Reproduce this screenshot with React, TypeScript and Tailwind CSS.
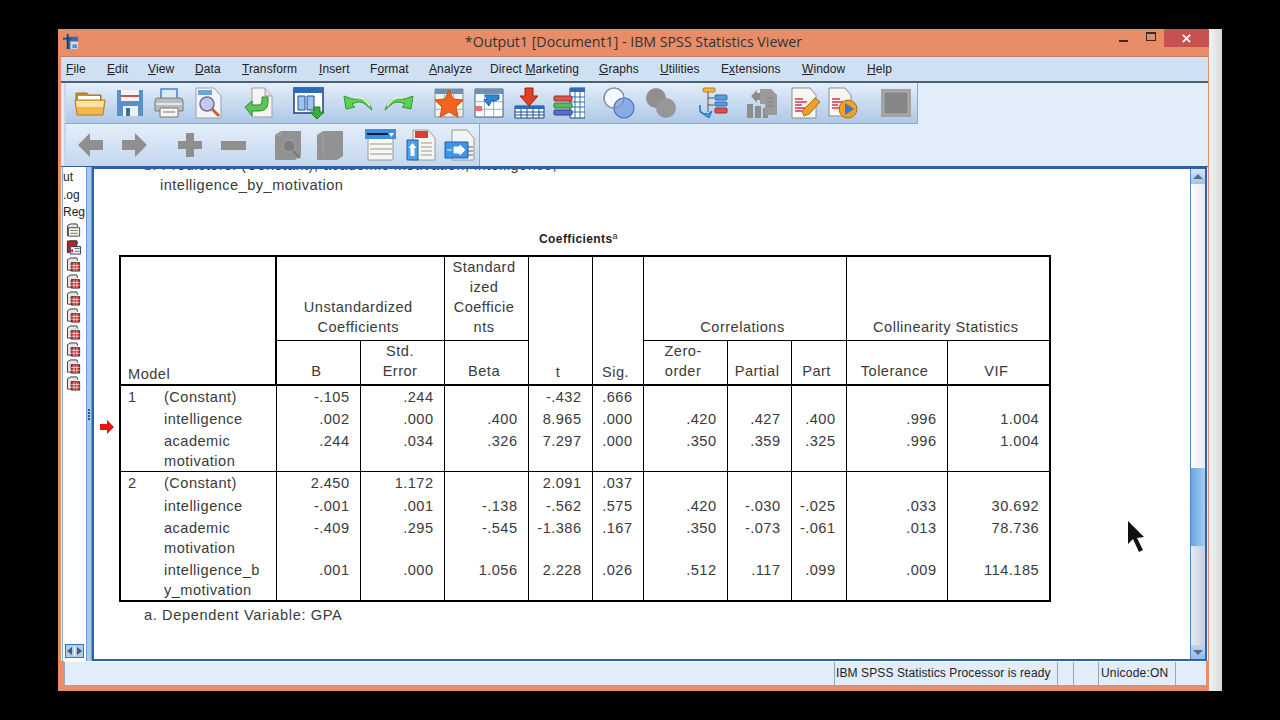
import React from "react";

const MENU: [string, string, string, string][] = [
  ["", "F", "ile", "w-[41px]"],
  ["", "E", "dit", "w-[41px]"],
  ["", "V", "iew", "w-[47px]"],
  ["", "D", "ata", "w-[47px]"],
  ["", "T", "ransform", "w-[77px]"],
  ["", "I", "nsert", "w-[51px]"],
  ["F", "o", "rmat", "w-[59px]"],
  ["", "A", "nalyze", "w-[61px]"],
  ["Direct ", "M", "arketing", "w-[109px]"],
  ["", "G", "raphs", "w-[61px]"],
  ["", "U", "tilities", "w-[61px]"],
  ["E", "x", "tensions", "w-[81px]"],
  ["", "W", "indow", "w-[65px]"],
  ["", "H", "elp", "w-[40px]"],
];

function Sheet({ children }: { children?: React.ReactNode }) {
  return (
    <svg viewBox="0 0 32 32" className="w-[32px] h-[32px] shrink-0">
      {children}
    </svg>
  );
}

const IconOpen = () => (
  <Sheet>
    <path d="M2 6h11l2 2h12v10H2z" fill="#c98a2a" stroke="#a8701c" />
    <path d="M4 9h22v6H4z" fill="#fff" />
    <path d="M1 13h30l-2 15H3z" fill="#f7b64b" stroke="#b97a1f" />
    <path d="M2 14h28l-1 6H3z" fill="#fde3a5" />
  </Sheet>
);
const IconSave = () => (
  <Sheet>
    <path d="M3 3h26v26H3z" fill="#5b8fc7" />
    <path d="M7 3h18v11H7z" fill="#f3f3f3" />
    <path d="M7 8h18v2H7z" fill="#c8505f" />
    <path d="M9 19h15v10H9z" fill="#eef2f6" />
    <path d="M12 21h4v8h-4z" fill="#3f6d9f" />
  </Sheet>
);
const IconPrint = () => (
  <Sheet>
    <path d="M8 2h16v10H8z" fill="#dbe8f5" stroke="#4f81bd" strokeWidth="1.5" />
    <path d="M2 14q0-3 3-3h22q3 0 3 3v10H2z" fill="#b9bcc0" stroke="#7a7d80" />
    <path d="M3 16h26v2H3z" fill="#e6e6e6" />
    <path d="M7 21h18v9H7z" fill="#f4f4f4" stroke="#777" />
    <path d="M10 25h12" stroke="#777" />
  </Sheet>
);
const IconPreview = () => (
  <Sheet>
    <path d="M3 1h18l7 8v22H3z" fill="#f2f4f7" stroke="#9aa0a8" />
    <path d="M5 3h14v5H5z" fill="#6fa3d8" />
    <circle cx="14" cy="17" r="7" fill="#c5c8ef" stroke="#6b6f90" strokeWidth="1.5" />
    <path d="M19 22l7 7" stroke="#c9603a" strokeWidth="3" />
  </Sheet>
);
const IconGoto = () => (
  <Sheet>
    <path d="M9 1h13l7 8v21H9z" fill="#f4f4f0" stroke="#a0a0a0" />
    <path d="M22 1v8h7" fill="#ddd" stroke="#a0a0a0" />
    <path d="M2 20l7-6v4h7q3 0 3-4v-4h6v5q0 9-9 9H9v5z" fill="#5dc45a" stroke="#2f8a33" />
  </Sheet>
);
const IconVars = () => (
  <Sheet>
    <path d="M1 1h29v25H1z" fill="#fff" stroke="#1f3f78" strokeWidth="1.5" />
    <path d="M1 1h29v5H1z" fill="#2c6cb5" />
    <path d="M5 9h7v14H5zM14 9h7v14h-7z" fill="#9cc4ec" stroke="#1f4f90" />
    <path d="M21 20h6v5h4l-7 7-7-7h4z" fill="#3aae3a" stroke="#1e7d22" />
  </Sheet>
);
const IconUndo = () => (
  <Sheet>
    <path d="M2 9l2 13 9-2-3-3q8-4 13 0l7 6q-3-14-20-11z" fill="#5dd04f" stroke="#2f9a33" />
    <path d="M12 11q10-2 16 8" stroke="#e8f2dc" fill="none" strokeWidth="1.5" />
  </Sheet>
);
const IconRedo = () => (
  <Sheet>
    <path d="M30 9l-2 13-9-2 3-3q-8-4-13 0l-7 6q3-14 20-11z" fill="#5dd04f" stroke="#2f9a33" />
    <path d="M20 11q-10-2-16 8" stroke="#e8f2dc" fill="none" strokeWidth="1.5" />
  </Sheet>
);
const Grid = ({ x, y, w, h }: { x: number; y: number; w: number; h: number }) => (
  <g stroke="#8a9bb0" strokeWidth="0.8">
    <path d={`M${x} ${y + h / 3}h${w}M${x} ${y + (2 * h) / 3}h${w}`} />
    <path d={`M${x + w / 3} ${y}v${h}M${x + (2 * w) / 3} ${y}v${h}`} />
  </g>
);
const IconStar = () => (
  <Sheet>
    <path d="M2 2h28v28H2z" fill="#f3f3ee" stroke="#8d8d8d" />
    <path d="M2 2h28v5H2z" fill="#6f8fb8" />
    <Grid x={2} y={7} w={28} h={23} />
    <path d="M16 3l4 9 10 1-7 7 2 10-9-5-9 5 2-10-7-7 10-1z" fill="#f2641e" stroke="#c94d12" />
  </Sheet>
);
const IconCases = () => (
  <Sheet>
    <path d="M2 2h28v28H2z" fill="#fff" stroke="#3d5a80" />
    <path d="M2 2h28v5H2z" fill="#6f8fb8" />
    <Grid x={2} y={7} w={28} h={23} />
    <path d="M2 19h7v5H2z" fill="#ee6a73" />
    <path d="M12 8h14v4l-4 2h-4l-2 5-5-6 3-1z" fill="#2e86d6" stroke="#1f5fa0" />
  </Sheet>
);
const IconInsert = () => (
  <Sheet>
    <path d="M12 1h8v8h5l-9 10-9-10h5z" fill="#e04027" stroke="#9c2413" />
    <path d="M2 19h29v12H2z" fill="#fff" stroke="#1f3f78" />
    <path d="M2 19h29v3H2z" fill="#2c6cb5" />
    <path d="M2 25h29M2 28h29M8 22v9M14 22v9M20 22v9M26 22v9" stroke="#1f4f90" />
  </Sheet>
);
const IconSplit = () => (
  <Sheet>
    <path d="M17 1h15v30H17z" fill="#fff" stroke="#1f3f78" />
    <path d="M17 1h15v4H17z" fill="#2c6cb5" />
    <path d="M17 10h15M17 15h15M17 20h15M17 25h15M22 5v26M27 5v26" stroke="#2c6cb5" />
    <rect x="1" y="9" width="18" height="5" rx="1" fill="#d9534f" stroke="#9c2b28" />
    <rect x="1" y="16" width="18" height="5" rx="1" fill="#5cb85c" stroke="#2f8a33" />
    <rect x="1" y="23" width="18" height="5" rx="1" fill="#5a6fc9" stroke="#33408f" />
  </Sheet>
);
const IconVenn = () => (
  <Sheet>
    <circle cx="11" cy="11" r="10" fill="#f5f8fc" stroke="#8290a6" strokeWidth="1.2" />
    <circle cx="21" cy="21" r="10" fill="#7fa5e6" fillOpacity="0.85" stroke="#4870b8" strokeWidth="1.2" />
    <circle cx="11" cy="11" r="10" fill="none" stroke="#8290a6" strokeWidth="1.2" />
  </Sheet>
);
const IconVennGray = () => (
  <Sheet>
    <circle cx="11" cy="11" r="10" fill="#8f8f8f" />
    <circle cx="21" cy="21" r="10" fill="#979797" />
  </Sheet>
);
const IconTree = () => (
  <Sheet>
    <rect x="6" y="1" width="12" height="4" rx="1" fill="#f2b640" stroke="#b98417" />
    <path d="M11 5v20M11 11h6M11 18h6" stroke="#555" fill="none" />
    <rect x="18" y="8" width="12" height="5" rx="1" fill="#5a9bd8" stroke="#2c6cb5" />
    <rect x="18" y="15" width="12" height="4" rx="1" fill="#5a9bd8" stroke="#2c6cb5" />
    <rect x="18" y="21" width="12" height="5" rx="1" fill="#d9534f" stroke="#9c2b28" />
    <path d="M3 18q-2 9 8 9l4-3-3 7-9-6z" fill="#3ba0e6" stroke="#1f6fb5" />
  </Sheet>
);
const IconScriptGray = () => (
  <Sheet>
    <path d="M1 17h6v14H1zM9 19h6v12H9zM17 21h5v10h-5z" fill="#8d8d8d" />
    <path d="M5 9l6-6v3h6v7h-6v3z" fill="#8d8d8d" />
    <path d="M14 2h11l6 6v20H19V17h-5z" fill="#9a9a9a" />
    <path d="M21 11h7M21 15h7M21 19h7" stroke="#7f7f7f" />
  </Sheet>
);
const IconEdit = () => (
  <Sheet>
    <path d="M3 1h18l6 7v23H3z" fill="#f6f6f2" stroke="#8d8d8d" />
    <path d="M6 12h8M6 15h12M6 18h7M6 21h10M6 24h8" stroke="#d8354f" strokeWidth="1.6" />
    <path d="M13 24l2 5 5-2 11-12-5-4z" fill="#eea12a" stroke="#a66e14" />
  </Sheet>
);
const IconRun = () => (
  <Sheet>
    <path d="M2 1h16l6 7v21H2z" fill="#f6f6f2" stroke="#8d8d8d" />
    <path d="M5 12h8M5 15h11M5 18h6M5 21h8" stroke="#d8354f" strokeWidth="1.6" />
    <circle cx="21" cy="22" r="9" fill="#f0a126" stroke="#a66e14" />
    <path d="M18 16l9 6-9 6z" fill="#2b7cc9" />
  </Sheet>
);
const IconFrameGray = () => (
  <Sheet>
    <path d="M1 2h30v28H1z" fill="#a2a2a2" />
    <path d="M4 5h24v22H4z" fill="#868686" stroke="#b0b0b0" />
  </Sheet>
);
const IconLeft = () => (
  <Sheet>
    <path d="M3 16L15 4v7h13v10H15v7z" fill="#8f8f8f" />
  </Sheet>
);
const IconRight = () => (
  <Sheet>
    <path d="M29 16L17 4v7H4v10h13v7z" fill="#8f8f8f" />
  </Sheet>
);
const IconPlus = () => (
  <Sheet>
    <path d="M12 4h8v8h8v8h-8v8h-8v-8H4v-8h8z" fill="#8f8f8f" />
  </Sheet>
);
const IconMinus = () => (
  <Sheet>
    <path d="M4 12h25v9H4z" fill="#8f8f8f" />
  </Sheet>
);
const IconBookSearchGray = () => (
  <Sheet>
    <path d="M3 6l6-4h20v25l-6 4H3z" fill="#929292" />
    <path d="M9 2v4H3" stroke="#a6a6a6" fill="none" />
    <circle cx="17" cy="17" r="6" fill="#7f7f7f" stroke="#a4a4a4" />
    <path d="M21 22l7 7" stroke="#777" strokeWidth="2" />
  </Sheet>
);
const IconBookGray = () => (
  <Sheet>
    <path d="M3 6l6-4h20v25l-6 4H3z" fill="#929292" />
    <path d="M9 2v25" stroke="#a2a2a2" />
  </Sheet>
);
const IconHeading = () => (
  <Sheet>
    <path d="M4 1h25v30H4z" fill="#f6f6f2" stroke="#9a9a9a" />
    <path d="M1 0h31v10H1z" fill="#3f8fe0" />
    <path d="M3 4h21v2H3z" fill="#101b40" />
    <path d="M25 4h5l-2.500 4z" fill="#fff" />
    <path d="M6 15h22M6 20h22M6 25h22" stroke="#999" />
  </Sheet>
);
const IconDesign = () => (
  <Sheet>
    <path d="M8 1h15l7 8v22H8z" fill="#f6f6f2" stroke="#9a9a9a" />
    <path d="M10 2h13v7H10z" fill="#d83c3c" />
    <path d="M16 14h11M16 18h11M16 22h11M16 26h11" stroke="#999" />
    <path d="M2 11h11v20H2z" fill="#4ca2ea" stroke="#1e5da8" />
    <path d="M7.500 14l4 5H9.500v8h-4v-8H3.500z" fill="#f4f8fc" />
  </Sheet>
);
const IconExport = () => (
  <Sheet>
    <path d="M8 1h15l7 8v22H8z" fill="#f1f3f6" stroke="#9a9a9a" />
    <path d="M24 18h5M24 22h5M24 26h5" stroke="#666" />
    <path d="M1 13h23v16H1z" fill="#3c95e8" stroke="#1e5da8" />
    <path d="M3 21h5M10 18h6v-2l5 5-5 5v-2h-6z" fill="#f4f8fc" stroke="#f4f8fc" />
  </Sheet>
);

function OutlineBook({ red, note }: { red?: boolean; note?: boolean }) {
  return (
    <svg viewBox="0 0 16 16" className="w-[16px] h-[15px] shrink-0 block">
      <path d="M1 14V3l3-2h7l1 3" fill="#e4e4e4" stroke="#333" />
      {note ? (
        <>
          <path d="M2 5h12v9H2z" fill="#f6f2e0" stroke="#444" />
          <path d="M4 8h8M4 11h8" stroke="#777" />
        </>
      ) : red ? (
        <>
          <path d="M1 1h10v12H1z" fill="#a52a2a" stroke="#333" />
          <path d="M4 7h11v8H4z" fill="#eef0f6" stroke="#334" />
          <path d="M5 10h2v3H5z" fill="#d22" />
          <path d="M9 9h5M9 12h5" stroke="#667" />
        </>
      ) : (
        <>
          <path d="M1 14h5" stroke="#333" />
          <path d="M5 6h9v9H5z" fill="#c92e2e" stroke="#333" />
          <path d="M5 9h9M5 12h9M8 6v9M11 6v9" stroke="#fff" strokeWidth="0.7" />
        </>
      )}
    </svg>
  );
}

type Row = { name: React.ReactNode; h: string; vals: string[] };

const G1: Row[] = [
  { name: "(Constant)", h: "h-[23px]", vals: ["-.105", ".244", "", "-.432", ".666", "", "", "", "", ""] },
  { name: "intelligence", h: "h-[22px]", vals: [".002", ".000", ".400", "8.965", ".000", ".420", ".427", ".400", ".996", "1.004"] },
  { name: <>academic<br />motivation</>, h: "h-[41px]", vals: [".244", ".034", ".326", "7.297", ".000", ".350", ".359", ".325", ".996", "1.004"] },
];
const G2: Row[] = [
  { name: "(Constant)", h: "h-[23px]", vals: ["2.450", "1.172", "", "2.091", ".037", "", "", "", "", ""] },
  { name: "intelligence", h: "h-[22px]", vals: ["-.001", ".001", "-.138", "-.562", ".575", ".420", "-.030", "-.025", ".033", "30.692"] },
  { name: <>academic<br />motivation</>, h: "h-[42px]", vals: ["-.409", ".295", "-.545", "-1.386", ".167", ".350", "-.073", "-.061", ".013", "78.736"] },
  { name: <>intelligence_b<br />y_motivation</>, h: "h-[41px]", vals: [".001", ".000", "1.056", "2.228", ".026", ".512", ".117", ".099", ".009", "114.185"] },
];

function Group({ n, rows, first }: { n: string; rows: Row[]; first?: boolean }) {
  return (
    <>
      {rows.map((r, i) => (
        <tr key={i} className={`${r.h} ${i === 0 && !first ? "border-t border-black" : ""}`}>
          {i === 0 && (
            <td rowSpan={rows.length} className="align-top pl-[7px] leading-[22px]">
              {n}
            </td>
          )}
          <td className="align-top leading-[20px] whitespace-nowrap pt-px">{r.name}</td>
          {r.vals.map((v, j) => (
            <td key={j} className="text-right align-top leading-[22px] border-l border-black pr-[10px]">
              {v}
            </td>
          ))}
        </tr>
      ))}
    </>
  );
}

function CoefTable() {
  const head = "font-normal border-l border-black align-bottom text-center leading-[20px] pr-[4px]";
  return (
    <table className="table-fixed w-[932px] border-collapse border-2 border-black text-[14.6px] tracking-[0.47px] text-[#3a3a3a] box-border">
      <colgroup>
        <col className="w-[44px]" />
        <col className="w-[112px]" />
        <col className="w-[84px]" />
        <col className="w-[84px]" />
        <col className="w-[84px]" />
        <col className="w-[64px]" />
        <col className="w-[51px]" />
        <col className="w-[84px]" />
        <col className="w-[64px]" />
        <col className="w-[55px]" />
        <col className="w-[101px]" />
        <col className="w-[103px]" />
      </colgroup>
      <thead>
        <tr className="h-[84px]">
          <th colSpan={2} rowSpan={2} className="font-normal align-bottom text-left pl-[7px] leading-[20px] border-r-2 border-black">
            Model
          </th>
          <th colSpan={2} className={`${head} border-b pb-[3px]`}>
            Unstandardized
            <br />
            Coefficients
          </th>
          <th className={`${head} border-b pb-[3px]`}>
            Standard
            <br />
            ized
            <br />
            Coefficie
            <br />
            nts
          </th>
          <th rowSpan={2} className={`${head} pb-[2px]`}>t</th>
          <th rowSpan={2} className={`${head} pb-[2px]`}>Sig.</th>
          <th colSpan={3} className={`${head} border-b pb-[3px]`}>Correlations</th>
          <th colSpan={2} className={`${head} border-b pb-[3px]`}>Collinearity Statistics</th>
        </tr>
        <tr className="h-[44px] border-b-2 border-black">
          <th className={`${head} pb-[3px]`}>B</th>
          <th className={`${head} pb-[3px]`}>
            Std.
            <br />
            Error
          </th>
          <th className={`${head} pb-[3px]`}>Beta</th>
          <th className={`${head} pb-[3px]`}>
            Zero-
            <br />
            order
          </th>
          <th className={`${head} pb-[3px]`}>Partial</th>
          <th className={`${head} pb-[3px]`}>Part</th>
          <th className={`${head} pb-[3px]`}>Tolerance</th>
          <th className={`${head} pb-[3px]`}>VIF</th>
        </tr>
      </thead>
      <tbody>
        <Group n="1" rows={G1} first />
        <Group n="2" rows={G2} />
      </tbody>
    </table>
  );
}

export default function App() {
  return (
    <div className="w-[1280px] h-[720px] bg-black overflow-hidden pt-[29px] pl-[58px] flex items-start font-['Liberation_Sans',sans-serif]">
      <div className="w-[1151px] h-[662px] bg-[#e98d68] flex flex-col">
        {/* title bar */}
        <div className="h-[27px] shrink-0 grid grid-cols-[1fr_auto_1fr] items-start">
          <div className="pl-[4px] pt-[4px]">
            <svg viewBox="0 0 18 18" className="w-[17px] h-[17px]">
              <path d="M6 4h11v13H6z" fill="#3a6ea5" />
              <path d="M9 9h8v8H9z" fill="#cfe0f3" />
              <path d="M11 12h5v4h-5z" fill="#5b8fc7" />
              <path d="M1 5h9v2H1z" fill="#1f4f7f" />
              <path d="M5 1h2v16H5z" fill="#16406b" />
            </svg>
          </div>
          <div className="text-[14.2px] leading-[26px] text-[#333] font-['Open_Sans',sans-serif]">
            *Output1 [Document1] - IBM SPSS Statistics Viewer
          </div>
          <div className="flex justify-end items-start">
            <div className="w-[9px] h-[2px] bg-[#3b2b22] mt-[11px] mr-[18px]" />
            <div className="w-[10px] h-[9px] border border-t-2 border-[#3b2b22] mt-[3px] mr-[8px]" />
            <div className="w-[45px] h-[18px] bg-[#c75050] flex items-center justify-center text-white">
              <svg viewBox="0 0 10 10" className="w-[9px] h-[9px]">
                <path d="M1 1l8 8M9 1l-8 8" stroke="#fff" strokeWidth="2" />
              </svg>
            </div>
          </div>
        </div>

        <div className="flex-1 flex flex-col ml-[3px] mr-px min-h-0 border-t border-[#c47a60]">
          {/* menu */}
          <div className="h-[26px] shrink-0 bg-[#cfe0f3] border-b-2 border-[#4b6071] flex items-center pl-[5px] text-[12px] text-[#222] tracking-[0.1px]">
            {MENU.map(([a, u, b, w]) => (
              <div key={u + b} className={`${w} shrink-0 whitespace-pre`}>
                {a}
                <u>{u}</u>
                {b}
              </div>
            ))}
          </div>

          {/* toolbars */}
          <div className="h-[84px] shrink-0 bg-[#e1edf9] flex flex-col pl-[3px] border-b border-[#2f5f95]">
            <div className="h-[41px] w-[854px] bg-gradient-to-b from-[#e4eefa] to-[#aec8e6] border-b border-[#8fa9c6] border-r flex items-center pl-[8px] border-l-2 border-l-[#c7d6e8]">
              <IconOpen />
              <div className="ml-[8px]"><IconSave /></div>
              <div className="ml-[7px]"><IconPrint /></div>
              <div className="ml-[8px]"><IconPreview /></div>
              <div className="ml-[18px]"><IconGoto /></div>
              <div className="ml-[18px]"><IconVars /></div>
              <div className="ml-[17px]"><IconUndo /></div>
              <div className="ml-[9px]"><IconRedo /></div>
              <div className="ml-[18px]"><IconStar /></div>
              <div className="ml-[8px]"><IconCases /></div>
              <div className="ml-[8px]"><IconInsert /></div>
              <div className="ml-[8px]"><IconSplit /></div>
              <div className="ml-[18px]"><IconVenn /></div>
              <div className="ml-[10px]"><IconVennGray /></div>
              <div className="ml-[20px]"><IconTree /></div>
              <div className="ml-[17px]"><IconScriptGray /></div>
              <div className="ml-[11px]"><IconEdit /></div>
              <div className="ml-[6px]"><IconRun /></div>
              <div className="ml-[21px]"><IconFrameGray /></div>
            </div>
            <div className="h-[42px] w-[416px] bg-gradient-to-b from-[#e4eefa] to-[#c3d7ee] border-r border-[#8fa9c6] flex items-center pl-[9px] border-l-2 border-l-[#c7d6e8]">
              <IconLeft />
              <div className="ml-[11px]"><IconRight /></div>
              <div className="ml-[24px]"><IconPlus /></div>
              <div className="ml-[11px]"><IconMinus /></div>
              <div className="ml-[23px]"><IconBookSearchGray /></div>
              <div className="ml-[10px]"><IconBookGray /></div>
              <div className="ml-[18px]"><IconHeading /></div>
              <div className="ml-[9px]"><IconDesign /></div>
              <div className="ml-[7px]"><IconExport /></div>
            </div>
          </div>

          {/* outline + viewer */}
          <div className="h-[494px] shrink-0 flex bg-[#e1edf9] pr-px">
            <div className="w-[24px] ml-px shrink-0 bg-white border-l border-[#8fb0d8] flex flex-col overflow-hidden relative">
              <div className="pt-[2px] text-[12px] leading-[17.5px] text-[#222] whitespace-nowrap">
                <div>ut</div>
                <div>.og</div>
                <div>Reg</div>
              </div>
              <div className="flex flex-col gap-[2px] ml-[3px] mt-[1px]">
                <OutlineBook note />
                <OutlineBook red />
                <OutlineBook />
                <OutlineBook />
                <OutlineBook />
                <OutlineBook />
                <OutlineBook />
                <OutlineBook />
                <OutlineBook />
                <OutlineBook />
              </div>
              <div className="absolute left-[2px] bottom-[3px] w-[19px] h-[14px] bg-[#a9cdf3] border border-[#3a73c0] flex items-center justify-center gap-[2px]">
                <div className="w-0 h-0 border-y-[4px] border-y-transparent border-r-[5px] border-r-[#556]" />
                <div className="w-px h-[10px] bg-white" />
                <div className="w-0 h-0 border-y-[4px] border-y-transparent border-l-[5px] border-l-[#556]" />
              </div>
            </div>
            <div className="w-[6px] shrink-0 bg-[#a8c8ec] border-x border-[#6f9ad0] flex flex-col items-center justify-center gap-[1px]">
              <div className="w-[2px] h-[2px] bg-[#33588f]" />
              <div className="w-[2px] h-[2px] bg-[#33588f]" />
              <div className="w-[2px] h-[2px] bg-[#33588f]" />
              <div className="w-[2px] h-[2px] bg-[#33588f]" />
            </div>
            <div className="flex-1 min-w-0 flex bg-white border-2 border-[#2e62b0]">
              <div className="flex-1 min-w-0 relative overflow-hidden text-[14.6px] tracking-[0.47px] text-[#3a3a3a]">
                <div className="-mt-[14px] pl-[50px] leading-[20px] whitespace-nowrap">b. Predictors: (Constant), academic motivation, intelligence,</div>
                <div className="pl-[66px] leading-[20px] whitespace-nowrap">intelligence_by_motivation</div>
                <div className="mt-[36px] w-[944px] pl-[25px] text-center text-[12px] tracking-[0.4px] font-bold leading-[16px] text-[#222]">
                  Coefficients<sup className="text-[9px] font-normal">a</sup>
                </div>
                <div className="mt-[8px] pl-[25px]">
                  <CoefTable />
                </div>
                <div className="mt-[3px] pl-[50px] leading-[20px] tracking-[0.63px]">a. Dependent Variable: GPA</div>

                <svg viewBox="0 0 14 14" className="absolute left-[6px] top-[251px] w-[14px] h-[14px]">
                  <path d="M0 4h7V0l7 7-7 7v-4H0z" fill="#ee1111" />
                </svg>
                <svg viewBox="0 0 17 31" className="absolute left-[1034px] top-[352px] w-[17px] h-[31px]">
                  <path d="M0 0l16 16-7 1 6 12-4 2-6-13-5 5z" fill="#111" />
                </svg>
              </div>
              <div className="w-[15px] shrink-0 flex flex-col border-l border-[#4f86cf]">
                <div className="h-[15px] shrink-0 bg-gradient-to-b from-[#d5e6f8] to-[#9cc4ee] flex items-center justify-center">
                  <div className="w-0 h-0 border-x-[5px] border-x-transparent border-b-[5px] border-b-[#5b6a80]" />
                </div>
                <div className="h-[284px] shrink-0 bg-gradient-to-r from-white to-[#e6e8f0]" />
                <div className="h-[78px] shrink-0 bg-gradient-to-r from-[#6aa5dd] to-[#a6cbef]" />
                <div className="flex-1 bg-gradient-to-r from-[#e8eaf2] to-[#c9cddd]" />
                <div className="h-[14px] shrink-0 bg-gradient-to-b from-[#bcd6f2] to-[#8fbcea] flex items-center justify-center">
                  <div className="w-0 h-0 border-x-[5px] border-x-transparent border-t-[5px] border-t-[#5b6a80]" />
                </div>
              </div>
            </div>
          </div>

          {/* status */}
          <div className="h-[24px] shrink-0 bg-[#e1edf9] flex items-stretch ml-[3px] mr-[2px] text-[12px] text-[#222] border-t border-[#f4f8fd]">
            <div className="w-[770px] border-l border-[#9aa6b4]" />
            <div className="w-[223px] border-l border-[#9aa6b4] pl-px leading-[22px] whitespace-nowrap tracking-[0.1px]">IBM SPSS Statistics Processor is ready</div>
            <div className="w-[16px] border-l border-[#9aa6b4]" />
            <div className="w-[25px] border-l border-[#9aa6b4]" />
            <div className="w-[77px] border-l border-[#9aa6b4] pl-[2px] leading-[22px] tracking-[0.2px]">Unicode:ON</div>
            <div className="flex-1 border-l border-[#9aa6b4]" />
          </div>
        </div>
        <div className="h-[6px] shrink-0" />
      </div>
      <div className="w-[13px] h-[662px] bg-gradient-to-r from-[#f4f4f4] to-[#d8d8d8]" />
    </div>
  );
}
